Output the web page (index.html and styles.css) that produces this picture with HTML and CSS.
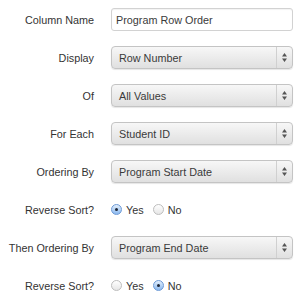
FILE: index.html
```html
<!DOCTYPE html>
<html lang="en">

<head>
    <meta charset="UTF-8">
    <meta name="viewport" content="width=device-width, initial-scale=1.0">
    <title>Column Settings</title>
    <link rel="stylesheet" href="styles.css">
</head>

<body>
    <form class="settings">
        <div class="row">
            <label class="label">Column Name</label>
            <div class="text-input">Program Row Order</div>
        </div>
        <div class="row">
            <label class="label">Display</label>
            <div class="select"><span class="value">Row Number</span><span class="arrows"><svg width="5" height="9" viewBox="0 0 5 9"><path d="M2.5 0 L5 3.5 L0 3.5 Z M2.5 9 L5 5.5 L0 5.5 Z" fill="#555"/></svg></span></div>
        </div>
        <div class="row">
            <label class="label">Of</label>
            <div class="select"><span class="value">All Values</span><span class="arrows"><svg width="5" height="9" viewBox="0 0 5 9"><path d="M2.5 0 L5 3.5 L0 3.5 Z M2.5 9 L5 5.5 L0 5.5 Z" fill="#555"/></svg></span></div>
        </div>
        <div class="row">
            <label class="label">For Each</label>
            <div class="select"><span class="value">Student ID</span><span class="arrows"><svg width="5" height="9" viewBox="0 0 5 9"><path d="M2.5 0 L5 3.5 L0 3.5 Z M2.5 9 L5 5.5 L0 5.5 Z" fill="#555"/></svg></span></div>
        </div>
        <div class="row">
            <label class="label">Ordering By</label>
            <div class="select"><span class="value">Program Start Date</span><span class="arrows"><svg width="5" height="9" viewBox="0 0 5 9"><path d="M2.5 0 L5 3.5 L0 3.5 Z M2.5 9 L5 5.5 L0 5.5 Z" fill="#555"/></svg></span></div>
        </div>
        <div class="row">
            <label class="label">Reverse Sort?</label>
            <div class="radios">
                <span class="radio checked"></span><span class="radio-text">Yes</span>
                <span class="radio"></span><span class="radio-text">No</span>
            </div>
        </div>
        <div class="row">
            <label class="label">Then Ordering By</label>
            <div class="select"><span class="value">Program End Date</span><span class="arrows"><svg width="5" height="9" viewBox="0 0 5 9"><path d="M2.5 0 L5 3.5 L0 3.5 Z M2.5 9 L5 5.5 L0 5.5 Z" fill="#555"/></svg></span></div>
        </div>
        <div class="row">
            <label class="label">Reverse Sort?</label>
            <div class="radios">
                <span class="radio"></span><span class="radio-text">Yes</span>
                <span class="radio checked"></span><span class="radio-text">No</span>
            </div>
        </div>
    </form>
</body>

</html>
```

FILE: styles.css
```css
html {
    background: #fff;
    font-family: "Liberation Sans", Arial, sans-serif;
}

body {
    margin: 0;
}

.settings {
    padding-top: 8px;
    font-size: 10.8px;
    color: #333;
}

.row {
    display: flex;
    align-items: center;
    height: 23px;
    margin-bottom: 15px;
}

.label {
    width: 94px;
    text-align: right;
    margin-right: 17px;
    color: #333;
}

.text-input {
    width: 182px;
    height: 23px;
    box-sizing: border-box;
    border: 1px solid #d2d2d2;
    border-radius: 3px;
    background: #fff;
    padding: 0 4px;
    display: flex;
    align-items: center;
    color: #3a3a3a;
    box-shadow: inset 0 1px 1px rgba(0, 0, 0, 0.05);
}

.select {
    width: 182px;
    height: 23px;
    box-sizing: border-box;
    border: 1px solid #c4c4c4;
    border-radius: 4px;
    background: linear-gradient(#f7f7f7, #e0e0e0);
    display: flex;
    align-items: center;
    color: #3a3a3a;
    box-shadow: 0 1px 1px rgba(0, 0, 0, 0.1);
}

.select .value {
    flex: 1;
    padding-left: 7px;
}

.select .arrows {
    width: 15px;
    height: 100%;
    border-left: 1px solid #d0d0d0;
    display: flex;
    align-items: center;
    justify-content: center;
}

.radios {
    display: flex;
    align-items: center;
}

.radio {
    width: 9px;
    height: 9px;
    border-radius: 50%;
    border: 1px solid #bdbdbd;
    background: linear-gradient(#ffffff, #e6e6e6);
    margin-right: 4px;
    position: relative;
}

.radio-text + .radio {
    margin-left: 9px;
}

.radio.checked {
    border-color: #6d9ad6;
    background: linear-gradient(#e3effc, #8ab8ef);
}

.radio.checked::after {
    content: "";
    position: absolute;
    left: 3px;
    top: 3px;
    width: 3px;
    height: 3px;
    border-radius: 50%;
    background: #1c2636;
}

.radio-text {
    color: #333;
}
```
